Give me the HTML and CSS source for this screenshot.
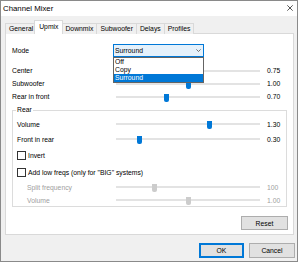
FILE: index.html
```html
<!DOCTYPE html>
<html>
<head>
<meta charset="utf-8">
<title>Channel Mixer</title>
<link rel="stylesheet" href="styles.css">
</head>
<body>
<div class="window">
  <div class="titlebar">
    <span class="title">Channel Mixer</span>
    <svg class="close" width="6" height="6" viewBox="0 0 6 6"><path d="M0.3 0.3 L5.7 5.7 M5.7 0.3 L0.3 5.7" stroke="#2b2b2b" stroke-width="0.8" fill="none"/></svg>
  </div>
  <div class="client">
    <div class="tabs">
      <div class="tab">General</div>
      <div class="tab active">Upmix</div>
      <div class="tab">Downmix</div>
      <div class="tab">Subwoofer</div>
      <div class="tab">Delays</div>
      <div class="tab">Profiles</div>
    </div>
    <div class="panel">
      <div class="row mode-row">
        <span class="label">Mode</span>
        <div class="combo">
          <span class="combo-text">Surround</span>
          <svg class="chevron" width="5" height="3" viewBox="0 0 5 3"><path d="M0.4 0.4 L2.5 2.5 L4.6 0.4" stroke="#505050" stroke-width="0.8" fill="none"/></svg>
          <ul class="droplist">
            <li>Off</li>
            <li>Copy</li>
            <li class="selected">Surround</li>
          </ul>
        </div>
      </div>
      <div class="row first">
        <span class="label">Center</span>
        <div class="slider"><div class="thumb" style="--v:0.375"></div></div>
        <span class="value">0.75</span>
      </div>
      <div class="row">
        <span class="label">Subwoofer</span>
        <div class="slider"><div class="thumb" style="--v:0.5"></div></div>
        <span class="value">1.00</span>
      </div>
      <div class="row">
        <span class="label">Rear in front</span>
        <div class="slider"><div class="thumb" style="--v:0.35"></div></div>
        <span class="value">0.70</span>
      </div>
      <fieldset class="group">
        <legend>Rear</legend>
        <div class="row">
          <span class="label">Volume</span>
          <div class="slider"><div class="thumb" style="--v:0.65"></div></div>
          <span class="value">1.30</span>
        </div>
        <div class="row gap3">
          <span class="label">Front in rear</span>
          <div class="slider"><div class="thumb" style="--v:0.16"></div></div>
          <span class="value">0.30</span>
        </div>
        <div class="row gap4">
          <label class="check"><span class="box"></span><span>Invert</span></label>
        </div>
        <div class="row gap5">
          <label class="check"><span class="box"></span><span>Add low freqs (only for "BIG" systems)</span></label>
        </div>
        <div class="row gap3 disabled">
          <span class="label">Split frequency</span>
          <div class="slider"><div class="thumb" style="--v:0.267"></div></div>
          <span class="value">100</span>
        </div>
        <div class="row gap1 disabled">
          <span class="label">Volume</span>
          <div class="slider"><div class="thumb" style="--v:0.5"></div></div>
          <span class="value">1.00</span>
        </div>
      </fieldset>
      <div class="panel-actions">
        <button class="btn">Reset</button>
      </div>
    </div>
    <div class="dialog-actions">
      <button class="btn default">OK</button>
      <button class="btn">Cancel</button>
    </div>
  </div>
</div>
</body>
</html>
```

FILE: styles.css
```css
* { box-sizing: border-box; }
html, body { margin: 0; padding: 0; background: #fff; }
body {
  font-family: "Liberation Sans", Arial, sans-serif;
  font-size: 6.8px;
  color: #000;
}
.window {
  width: 298px;
  height: 262px;
  border: 1px solid #8a8a8a;
  display: flex;
  flex-direction: column;
  background: #f0f0f0;
}
.titlebar {
  height: 15px;
  flex: none;
  background: #fff;
  display: flex;
  align-items: center;
  justify-content: space-between;
  padding: 0 4px 0 2px;
}
.title { font-size: 7.8px; line-height: 15px; }
.close { display: block; margin-top: -1px; }
.client {
  flex: 1;
  display: flex;
  flex-direction: column;
  padding: 4px 3px 0 4px;
}
.tabs {
  display: flex;
  align-items: flex-end;
  height: 14px;
  margin-bottom: -1px;
  position: relative;
  z-index: 1;
  flex: none;
}
.tab {
  height: 11px;
  border: 1px solid #d9d9d9;
  border-bottom: none;
  background: #f0f0f0;
  padding: 0 3px;
  line-height: 10px;
  margin-right: -1px;
  white-space: nowrap;
}
.tab.active {
  height: 14px;
  background: #fff;
  margin: 0 -2px;
  padding: 0 4px;
  line-height: 12px;
  position: relative;
  z-index: 1;
}
.panel {
  height: 202px;
  flex: none;
  background: #fff;
  border: 1px solid #d9d9d9;
  padding: 10px 5px 0 6px;
  display: flex;
  flex-direction: column;
}
.row {
  display: flex;
  align-items: center;
  height: 13px;
  flex: none;
  white-space: nowrap;
}
.row.first { margin-top: 7px; }
.label { width: 104px; flex: none; }
.mode-row .label { width: 101px; }
.combo {
  position: relative;
  width: 91px;
  height: 13px;
  border: 1px solid #0078d7;
  background: #e5f1fb;
  display: flex;
  align-items: center;
  justify-content: space-between;
  padding: 0 2px 0 1px;
}
.chevron { display: block; }
.droplist {
  position: absolute;
  top: 12px;
  left: -1px;
  width: 91px;
  margin: 0;
  padding: 0;
  list-style: none;
  background: #fff;
  border: 1px solid #646464;
  z-index: 5;
}
.droplist li {
  height: 8px;
  line-height: 8px;
  padding-left: 1px;
}
.droplist li.selected { background: #0078d7; color: #fff; }
.slider {
  position: relative;
  width: 144px;
  height: 2px;
  background: #e3e3e3;
  flex: none;
}
.thumb {
  position: absolute;
  top: -2px;
  left: calc(var(--v) * 100% - 2.5px);
  width: 5px;
  height: 8px;
  background: #0078d7;
  border-radius: 0 0 2px 2px;
}
.value { margin-left: 7px; }
.group {
  margin: 3px 1px 0 0;
  padding: 4px 0 0 4px;
  border: 1px solid #dcdcdc;
  min-width: 0;
  flex: none;
}
.group legend {
  padding: 0 1px;
  margin-left: -1px;
  line-height: 8px;
}
.group .row { height: 12px; }
.group .label { width: 99px; }
.gap1 { margin-top: 1px; }
.gap3 { margin-top: 3px; }
.gap4 { margin-top: 4px; }
.gap5 { margin-top: 5px; }
.disabled { color: #a0a0a0; }
.disabled .label { padding-left: 10px; }
.disabled .thumb { background: #cccccc; }
.check { display: flex; align-items: center; gap: 2px; }
.box {
  width: 9px;
  height: 9px;
  border: 1px solid #333;
  background: #fff;
  flex: none;
}
.panel-actions {
  display: flex;
  justify-content: flex-end;
  margin-top: 9px;
}
.btn {
  width: 47px;
  height: 14px;
  background: #e1e1e1;
  border: 1px solid #adadad;
  font: inherit;
  color: #000;
  padding: 0;
  margin: 0;
}
.dialog-actions {
  display: flex;
  justify-content: flex-end;
  gap: 5px;
  margin-top: 8px;
  margin-right: -1px;
}
.dialog-actions .btn { height: 15px; width: 45px; }
.dialog-actions .btn + .btn { width: 46px; }
.btn.default {
  border-color: #0078d7;
  box-shadow: inset 0 0 0 1px #0078d7;
}
```
